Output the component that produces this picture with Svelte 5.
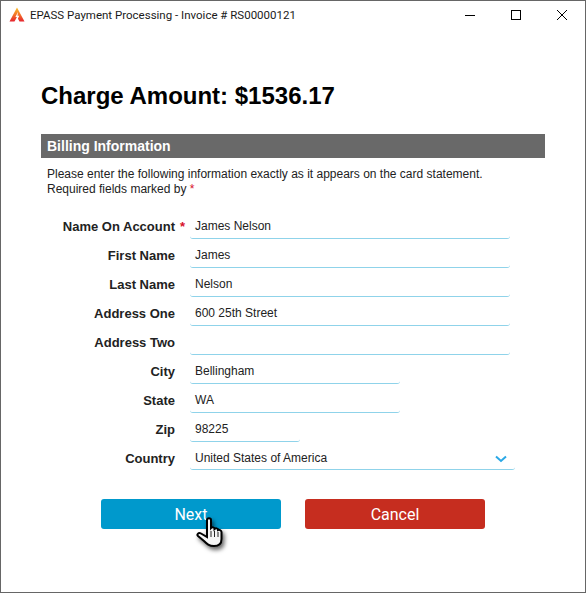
<script lang="ts">
	const fields = [
		{ label: 'Name On Account', value: 'James Nelson', size: 'full', required: true },
		{ label: 'First Name', value: 'James', size: 'full' },
		{ label: 'Last Name', value: 'Nelson', size: 'full' },
		{ label: 'Address One', value: '600 25th Street', size: 'full' },
		{ label: 'Address Two', value: '', size: 'full' },
		{ label: 'City', value: 'Bellingham', size: 'mid' },
		{ label: 'State', value: 'WA', size: 'mid' },
		{ label: 'Zip', value: '98225', size: 'small' }
	];
</script>

<div class="window">
	<header class="titlebar">
		<svg class="app-icon" width="16" height="16" viewBox="0 0 16 16">
			<defs>
				<linearGradient id="flame" x1="0" y1="0" x2="0" y2="1">
					<stop offset="0" stop-color="#f9c02a" />
					<stop offset="0.5" stop-color="#f4762a" />
					<stop offset="1" stop-color="#e5232f" />
				</linearGradient>
			</defs>
			<path d="M8 0.5 L15.5 14.5 H10.5 L8 10 L5.5 14.5 H0.5 Z" fill="url(#flame)" />
			<path d="M9 5 L6.4 10 H8 L7.2 15.5 L10.2 8.8 H8.5 Z" fill="#fff" />
		</svg>
		<span class="title">EPASS Payment Processing - Invoice # RS00000121</span>
		<div class="controls">
			<svg width="46" height="30" viewBox="0 0 46 30"><path d="M18 15.5 H28" stroke="#000" fill="none" /></svg>
			<svg width="46" height="30" viewBox="0 0 46 30"><rect x="18.5" y="10.5" width="9" height="9" stroke="#000" fill="none" /></svg>
			<svg width="46" height="30" viewBox="0 0 46 30"><path d="M18 10 L28 20 M28 10 L18 20" stroke="#000" fill="none" /></svg>
		</div>
	</header>

	<main class="content">
		<h1>Charge Amount: $1536.17</h1>
		<h2>Billing Information</h2>
		<p class="intro">
			Please enter the following information exactly as it appears on the card statement.<br />
			Required fields marked by <span class="req">*</span>
		</p>

		<form class="form">
			{#each fields as f}
				<div class="row">
					<label>{f.label}{#if f.required}<span class="req hang">*</span>{/if}</label>
					<div class="input {f.size}">{f.value}</div>
				</div>
			{/each}
			<div class="row">
				<label>Country</label>
				<div class="input country">
					United States of America
					<svg width="12" height="8" viewBox="0 0 12 8"><path d="M1 1.5 L6 6 L11 1.5" stroke="#2aa8e6" stroke-width="2" fill="none" /></svg>
				</div>
			</div>
		</form>

		<div class="buttons">
			<div class="btn next">Next</div>
			<div class="btn cancel">Cancel</div>
			<svg class="cursor" width="40" height="45" viewBox="0 0 40 45">
				<path d="M17 10 C17 7.5 21 7.5 21 10 L21 18 C22 17 24.5 17 24.5 19 C25.5 18 28 18 28 20 C29 19.5 31.5 20 31.5 22 L31.5 29 C31.5 33 29 36 24 36 C19 36 17 34 14 31 L8 26 C6.5 24.5 8.5 22 11 23.5 L17 27 Z" fill="#f5f5f5" stroke="#000" stroke-width="2" />
				<path d="M21 21 V27 M24.5 21 V27 M28 22 V27" stroke="#222" />
			</svg>
		</div>
	</main>
</div>

<style>
	:global(body) {
		margin: 0;
		background: #fff;
	}

	.window {
		width: 586px;
		height: 593px;
		box-sizing: border-box;
		border: 1px solid #666;
		background: #fff;
		font-family: 'Liberation Sans', Arial, sans-serif;
		overflow: hidden;
	}

	.titlebar {
		display: flex;
		align-items: center;
		box-sizing: border-box;
		height: 30px;
		padding: 0 0 2px 8px;
	}

	.app-icon {
		margin-right: 5px;
	}

	.title {
		font-family: Roboto, 'Noto Sans', sans-serif;
		font-size: 11.5px;
		color: #1a1a1a;
	}

	.controls {
		display: flex;
		margin-left: auto;
	}

	.content {
		padding: 0 40px;
	}

	h1 {
		margin: 51px 0 0;
		font-size: 24px;
		line-height: 28px;
		color: #000;
	}

	h2 {
		margin: 24px 0 0;
		height: 24px;
		line-height: 24px;
		padding-left: 6px;
		background: #696969;
		color: #fff;
		font-size: 14px;
	}

	.intro {
		margin: 9px 0 0 6px;
		font-size: 12px;
		line-height: 15px;
		color: #222;
	}

	.req {
		color: #d8102a;
	}

	.hang {
		display: inline-block;
		width: 0;
		text-indent: 5px;
		white-space: nowrap;
	}

	.form {
		margin-top: 17px;
		display: flex;
		flex-direction: column;
		gap: 4px;
	}

	.row {
		display: flex;
		height: 25px;
	}

	label {
		width: 134px;
		text-align: right;
		font-size: 13px;
		font-weight: bold;
		color: #222;
		line-height: 25px;
	}

	.input {
		margin-left: 15px;
		box-sizing: border-box;
		padding-left: 5px;
		height: 25px;
		line-height: 25px;
		font-size: 12px;
		color: #222;
		border-bottom: 1px solid #8fd3ea;
		border-radius: 3px;
	}

	.full { width: 320px; }
	.mid { width: 210px; }
	.small { width: 110px; }

	.country {
		width: 325px;
		height: 24px;
		display: flex;
		justify-content: space-between;
		align-items: center;
		padding: 2px 8px 0 5px;
	}

	.buttons {
		position: relative;
		display: flex;
		gap: 24px;
		margin: 28px 0 0 60px;
	}

	.btn {
		width: 180px;
		height: 30px;
		line-height: 31px;
		border-radius: 3px;
		text-align: center;
		color: #fff;
		font-family: Roboto, 'Noto Sans', sans-serif;
		font-size: 16px;
	}

	.next { background: #0099cc; }
	.cancel { background: #c62d1f; }

	.cursor {
		position: absolute;
		left: 89px;
		top: 11px;
		filter: drop-shadow(2px 3px 2px rgba(0, 0, 0, 0.6));
	}
</style>
